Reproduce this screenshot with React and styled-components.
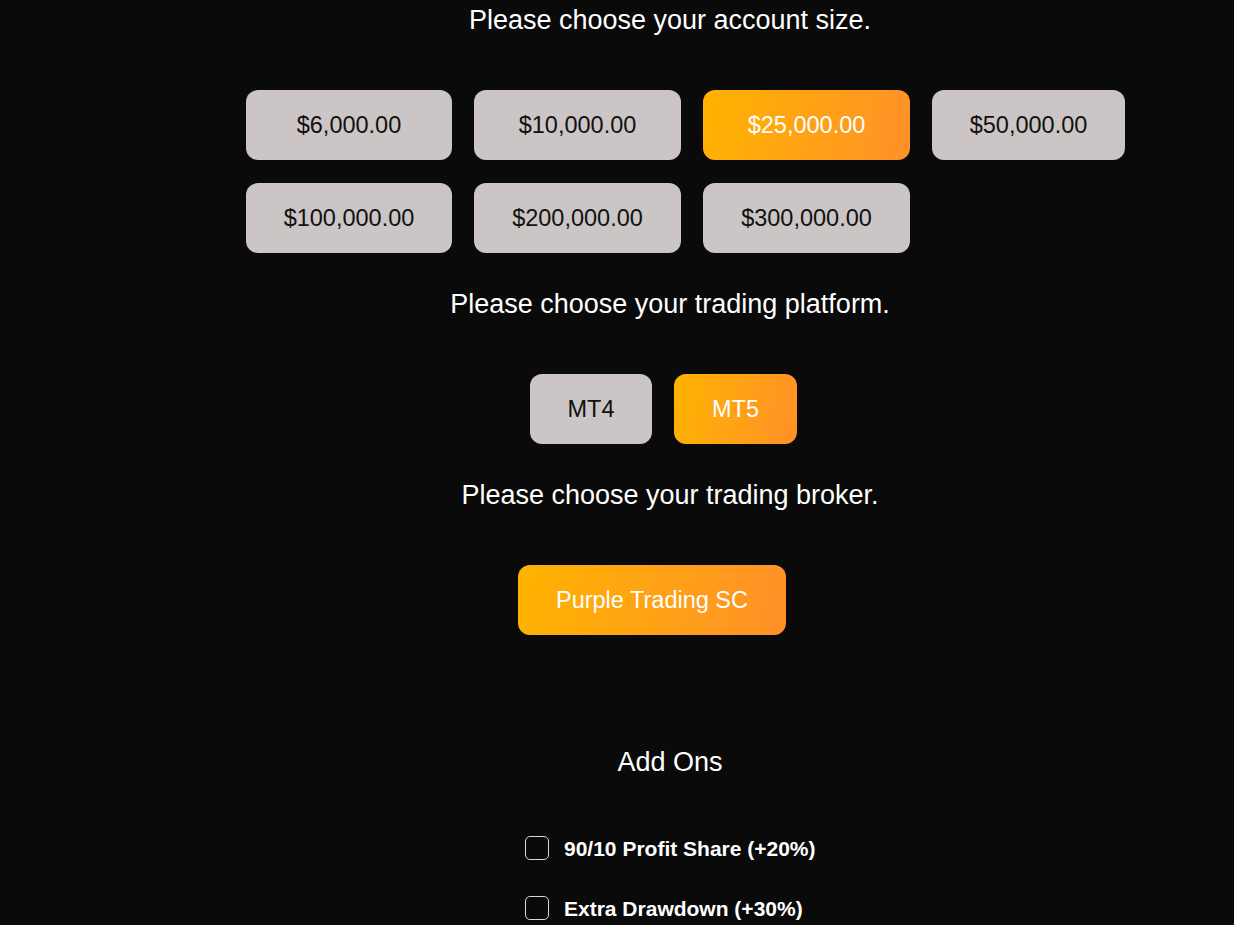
import React, { useState } from "react";
import styled, { createGlobalStyle, css } from "styled-components";

const Global = createGlobalStyle`
  html, body { margin: 0; padding: 0; background: #0a0a0a; }
  body { font-family: "Liberation Sans", Arial, sans-serif; color: #fff; }
  * { box-sizing: border-box; }
`;

const Page = styled.div`
  min-height: 925px;
  background: #0a0a0a;
  padding: 5px 0 0 106px;
`;

const Column = styled.main`
  width: 1128px;
  display: flex;
  flex-direction: column;
  align-items: flex-start;
`;

const Heading = styled.h2`
  align-self: stretch;
  margin: ${(p) => p.$top || 0}px 0 ${(p) => p.$bottom || 0}px;
  font-size: 27px;
  line-height: 31px;
  font-weight: 400;
  text-align: center;
  color: #fff;
`;

const SizeGrid = styled.div`
  display: grid;
  grid-template-columns: 206px 207px 207px 193px;
  column-gap: 22px;
  row-gap: 23px;
  margin-left: ${(p) => p.$left}px;
`;

const ButtonRow = styled.div`
  display: flex;
  gap: 22px;
  margin-left: ${(p) => p.$left}px;
`;

const Choice = styled.button`
  height: 70px;
  width: ${(p) => (p.$width ? `${p.$width}px` : "auto")};
  border: none;
  border-radius: 12px;
  font-family: "Liberation Sans", Arial, sans-serif;
  font-size: 23.5px;
  cursor: pointer;
  background: #cbc5c5;
  color: #111;
  padding: 0;
  ${(p) =>
    p.$active &&
    css`
      background: linear-gradient(100deg, #ffb300 0%, #ff9128 100%);
      color: #fff;
    `}
`;

const AddOnList = styled.div`
  display: flex;
  flex-direction: column;
  gap: 36px;
  margin: 58px 0 0 419px;
`;

const AddOnRow = styled.label`
  display: flex;
  align-items: center;
  gap: 15px;
  height: 24px;
  cursor: pointer;
`;

const Box = styled.span`
  width: 24px;
  height: 24px;
  border: 1px solid #d8d8d8;
  border-radius: 5px;
  background: ${(p) => (p.$checked ? "#ffa41a" : "transparent")};
`;

const AddOnText = styled.span`
  font-size: 21px;
  font-weight: 700;
  color: #fff;
  line-height: 24px;
  padding-top: 2px;
`;

const sizes = [
  "$6,000.00",
  "$10,000.00",
  "$25,000.00",
  "$50,000.00",
  "$100,000.00",
  "$200,000.00",
  "$300,000.00",
];

export default function App() {
  const [size, setSize] = useState("$25,000.00");
  const [platform, setPlatform] = useState("MT5");
  const [addons, setAddons] = useState({});
  const toggle = (k) => setAddons((a) => ({ ...a, [k]: !a[k] }));

  return (
    <Page>
      <Global />
      <Column>
        <Heading $bottom={54}>Please choose your account size.</Heading>
        <SizeGrid $left={140}>
          {sizes.map((s) => (
            <Choice key={s} $active={size === s} onClick={() => setSize(s)}>
              {s}
            </Choice>
          ))}
        </SizeGrid>

        <Heading $top={36} $bottom={54}>
          Please choose your trading platform.
        </Heading>
        <ButtonRow $left={424}>
          {["MT4", "MT5"].map((m) => (
            <Choice
              key={m}
              $width={m === "MT4" ? 122 : 123}
              $active={platform === m}
              onClick={() => setPlatform(m)}
            >
              {m}
            </Choice>
          ))}
        </ButtonRow>

        <Heading $top={36} $bottom={54}>
          Please choose your trading broker.
        </Heading>
        <ButtonRow $left={412}>
          <Choice $width={268} $active>
            Purple Trading SC
          </Choice>
        </ButtonRow>

        <Heading $top={112}>Add Ons</Heading>
        <AddOnList>
          {["90/10 Profit Share (+20%)", "Extra Drawdown (+30%)"].map((k) => (
            <AddOnRow key={k} onClick={() => toggle(k)}>
              <Box $checked={!!addons[k]} />
              <AddOnText>{k}</AddOnText>
            </AddOnRow>
          ))}
        </AddOnList>
      </Column>
    </Page>
  );
}
